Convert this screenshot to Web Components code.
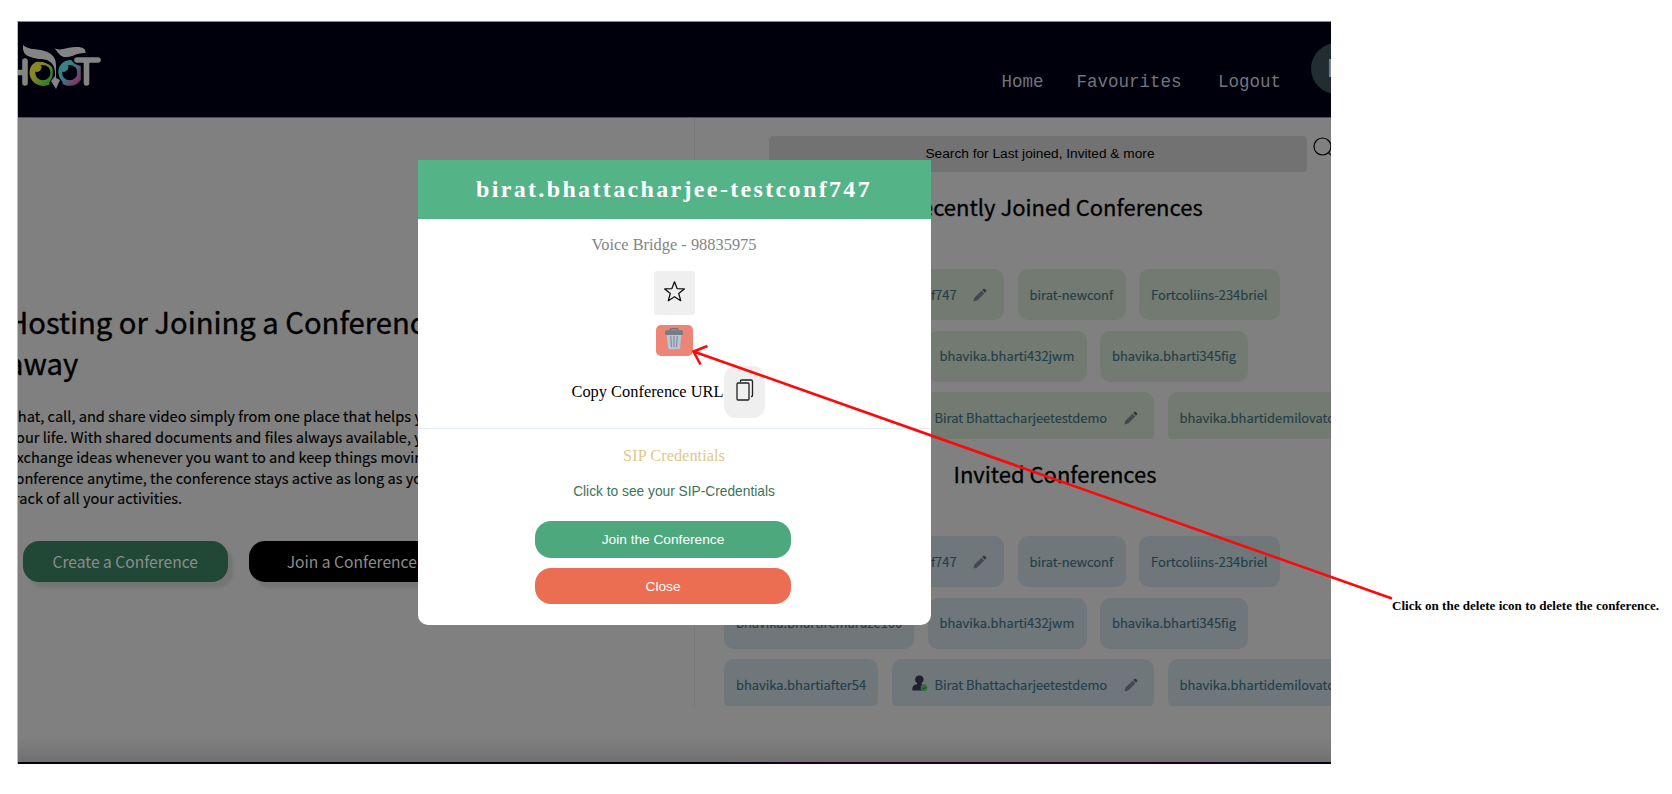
<!DOCTYPE html>
<html lang="en">
<head>
<meta charset="utf-8">
<title>Hoot - delete a conference</title>
<style>
html,body{margin:0;background:#fff;}
body{width:1672px;height:794px;overflow:hidden;position:relative;font-family:"Liberation Sans",sans-serif;}
</style>
</head>
<body>
<help-page></help-page>
<script>
const define = (name, html) => customElements.define(name, class extends HTMLElement {
  constructor() {
    super();
    this.attachShadow({ mode: 'open' }).innerHTML = html;
  }
});

define('hoot-logo', `
<style>:host{display:block;width:84px;height:46px}svg{display:block}</style>
<svg width="84" height="46" viewBox="18 43 84 46">
  <defs>
    <linearGradient id="a" x1="0" y1="0" x2="1" y2="1"><stop offset=".35" stop-color="#8a862c"/><stop offset=".8" stop-color="#36802a"/></linearGradient>
    <linearGradient id="b" x1="0" y1="0" x2="1" y2="1"><stop offset=".4" stop-color="#3a8084"/><stop offset=".9" stop-color="#842f5c"/></linearGradient>
  </defs>
  <path d="M25 61V83M14 72.500H25" fill="none" stroke="#848484" stroke-width="5.600" stroke-linecap="round"/>
  <path fill="url(#a)" d="M36 62C42 61 48 63 52 67C53.500 72 53 78 49.500 82L49.500 84.500C45 87 38 86 34 82.500C28 77 27.500 66 36 62Z"/>
  <circle cx="42.900" cy="72.700" r="7.600" fill="#00000d"/>
  <path fill="#8a862c" d="M36 63L41.500 66C42 70 38.500 73 35 71.500Z"/>
  <path fill="url(#b)" d="M71 60L75 64L80.800 66V80C77 86 69 87.500 62.500 84C64 82 60 80 59 76C56.500 67 62 60 71 60Z"/>
  <circle cx="69.700" cy="72.700" r="7.600" fill="#00000d"/>
  <path fill="#3a8084" d="M62 64L68.500 65.500C69 70 65 73 61.500 71.500Z"/>
  <path d="M77 60H98M86.500 61V83" fill="none" stroke="#00000d" stroke-width="7.600" stroke-linecap="round"/>
  <path d="M77 60H98M86.500 61V83" fill="none" stroke="#848484" stroke-width="5.600" stroke-linecap="round"/>
  <path fill="#848484" stroke="#00000d" stroke-width="1.400" paint-order="stroke" d="M23 45C27 49 34 49 41 50C51 52 56 57 56 65V78L60 80L56 89L51 81L55 76C56 63 49 59 39 59C29 57 22 56 23 45ZM54 48C62 52 67 46 77 47C83 47 86 49 85.500 53C77 52 72 58 64 57C58 55 58 51 54 48Z"/>
</svg>`);

define('nav-bar', `
<style>
:host{display:flex;height:96px;background:#00000d;border-bottom:1px solid #50505a;box-sizing:border-box;flex:none}
hoot-logo{margin:21px 0 0 0;flex:none}
nav{display:flex;margin:47.500px 0 0 auto;font:17.500px/24px "Liberation Mono",monospace;color:#74747c;gap:33px;white-space:pre;flex:none}
nav span:last-child{margin-left:3.500px}
.av{width:20px;height:51px;margin:20.500px 0 0 30px;overflow:hidden;flex:none}
.av div{width:51px;height:51px;box-sizing:border-box;border-radius:50%;background:#222d32;color:#888;font:26px/51px "Liberation Sans",sans-serif;padding-left:16px}
</style>
<hoot-logo></hoot-logo>
<nav><span>Home</span><span>Favourites</span><span>Logout</span></nav>
<div class="av"><div>B</div></div>`);

define('intro-panel', `
<style>
:host{display:block;width:677px;height:588px;box-sizing:border-box;border-right:1px solid #787878;padding-top:183px;overflow:hidden;font-family:"Noto Sans CJK SC",sans-serif;color:#000;flex:none}
h1{font-size:29.200px;font-weight:400;line-height:41px;margin:0 0 23px -11px;white-space:nowrap;-webkit-text-stroke:.4px #000}
p{font-size:14.600px;line-height:20.550px;margin:0 0 0 -9.500px;white-space:nowrap;-webkit-text-stroke:.15px #000}
.row{display:flex;gap:21px;margin:32px 0 0 4.500px}
.row div{width:205.500px;height:41px;border-radius:16px;box-sizing:border-box;background:#214836;color:#8d8d8d;font-size:15.600px;line-height:40px;text-align:center;box-shadow:5px 6px 3px #757575}
.row .j{background:#000}
</style>
<h1>Hosting or Joining a Conference is a click<br>away</h1>
<p>Chat, call, and share video simply from one place that helps you simplify<br>your life. With shared documents and files always available, you can<br>exchange ideas whenever you want to and keep things moving. Join a<br>conference anytime, the conference stays active as long as you keep<br>track of all your activities.</p>
<div class="row"><div>Create a Conference</div><div class="j">Join a Conference</div></div>`);

define('icon-pencil', `
<style>:host{display:block;width:14px;height:14px}svg{display:block}</style>
<svg width="14" height="14" viewBox="0 0 14 14"><path fill="#45484f" d="M.5 13.500L1.300 9.800L8.500 2.700L11.200 5.400L4.200 12.500Z"/><path fill="#35373d" d="M9.200 2L10.500.8C11.500 0 14 2.500 13.200 3.500L11.900 4.800Z"/></svg>`);

define('icon-user', `
<style>:host{display:block;width:16px;height:17px}svg{display:block}</style>
<svg width="16" height="17" viewBox="0 0 16 17"><path fill="#211f33" d="M7.300.5A4 4 0 0 1 9.500 8L9.800 9.500C13 10 13.500 12 13.500 15.500H.3C.3 11.500 1 10 5 9.300L5.200 8A4 4 0 0 1 7.300.5Z"/><circle cx="12" cy="12.700" r="3.400" fill="#317337"/><path d="M10.400 12.700L11.700 14L13.800 11.600" fill="none" stroke="#173c20"/></svg>`);

define('conf-chip', `
<style>
:host{display:flex;align-items:center;height:51px;padding:.5px 12px 0;box-sizing:border-box;border-radius:10px;background:var(--chip);color:#233e48;font:12.900px/20px "Noto Sans CJK SC",sans-serif;-webkit-text-stroke:.15px #233e48;white-space:nowrap;flex:none;overflow:hidden}
</style><slot></slot>`);

define('conf-list', `
<style>
:host{display:block;width:640px;flex:none}
h2{font:400 22px/34px "Noto Sans CJK SC",sans-serif;margin:0;text-align:center;width:662px;color:#000;-webkit-text-stroke:.3px #000}
.rows{display:flex;flex-direction:column;gap:10.500px;height:169.500px;overflow:hidden;margin-top:46px;border-radius:3px}
.r{display:flex;gap:13.500px;flex:none}
icon-user{margin:-2px 7px 0 8px}
.p{margin:0 5.500px 0 16.500px}
.w1{width:280px}.w2{width:108px}.w3{width:141px}.w4{width:190px}.w5{width:159px}.w6{width:148px}.w7{width:154px}.w8{width:262.500px}.w9{width:190px}
</style>
<h2><slot></slot></h2>
<div class="rows">
<div class="r"><conf-chip class="w1"><icon-user></icon-user><span>birat.bhattacharjee-testconf747</span><icon-pencil class="p"></icon-pencil></conf-chip><conf-chip class="w2">birat-newconf</conf-chip><conf-chip class="w3">Fortcoliins-234briel</conf-chip></div>
<div class="r"><conf-chip class="w4">bhavika.bhartiremaruze100</conf-chip><conf-chip class="w5">bhavika.bharti432jwm</conf-chip><conf-chip class="w6">bhavika.bharti345fig</conf-chip></div>
<div class="r"><conf-chip class="w7">bhavika.bhartiafter54</conf-chip><conf-chip class="w8"><icon-user></icon-user><span>Birat Bhattacharjeetestdemo</span><icon-pencil class="p"></icon-pencil></conf-chip><conf-chip class="w9">bhavika.bhartidemilovato</conf-chip></div>
</div>`);

define('conf-panel', `
<style>
:host{display:block;padding:18px 0 0 29px;width:607px;overflow:hidden;flex:none}
.s{display:flex;margin-left:45px}
.bar{width:538px;height:36px;border-radius:4px;background:#727272;color:#000;font:13.700px/35px "Liberation Sans",sans-serif;text-align:center;text-indent:4px;flex:none}
svg{display:block;margin:1px 0 0 6px;flex:none}
conf-list{--chip:#727a71;margin-top:17px}
conf-list+conf-list{--chip:#6f777b;margin-top:17.500px}
</style>
<div class="s"><div class="bar">Search for Last joined, Invited &amp; more</div><svg width="24" height="24" viewBox="0 0 24 24" fill="none" stroke="#000" stroke-width="1.200"><circle cx="9.500" cy="9.500" r="8.500"/><path d="M15.500 15.500L23 23"/></svg></div>
<conf-list>Recently Joined Conferences</conf-list>
<conf-list>Invited Conferences</conf-list>`);

define('conf-modal', `
<style>
:host{display:flex;flex-direction:column;align-items:center;width:513px;height:465px;border-radius:0 0 10px 10px;background:#fff;font:16.400px/20px "Liberation Serif",serif;overflow:hidden;white-space:nowrap}
header{width:100%;height:59px;background:#54b487;color:#fff;font-weight:700;font-size:24px;line-height:59px;letter-spacing:2.350px;text-align:center;flex:none}
.vb{color:#848484;margin-top:16px}
.star{width:41px;height:44px;border-radius:3px;background:#efefef;margin-top:16px;display:flex;justify-content:center}
.star svg{margin-top:9px}
.del{width:37px;height:31px;border-radius:5px;background:#eb8575;margin-top:10px;display:flex;justify-content:center}
.del svg{margin-top:2px}
.copy{display:flex;margin-top:10px;margin-left:-12px;height:52px;align-items:flex-start}
.copy span{margin-top:16px}
.copy div{width:41px;height:52px;border-radius:12px;background:#efefef}
.copy svg{display:block;margin:13px 0 0 12px}
hr{width:100%;height:1px;border:0;background:#e6edf0;margin:10px 0 0;flex:none}
.sip{color:#dfc88d;margin-top:17px}
.see{font:13.750px/20px "Liberation Sans",sans-serif;color:#3a7455;margin-top:16px}
.b{width:256.500px;height:36.500px;border-radius:16px;background:#4ea87d;color:#fff;font:13.700px/37px "Liberation Sans",sans-serif;text-align:center;margin:19px 22px 0 0}
.c{background:#ec6e52;margin-top:10px}
</style>
<header>birat.bhattacharjee-testconf747</header>
<div class="vb">Voice Bridge - 98835975</div>
<div class="star"><svg width="23" height="23" viewBox="0 0 23 23"><path d="M11.500 1.800L14.100 8.600L21.300 8.900L15.700 13.400L17.700 20.700L11.500 16.700L5.300 20.700L7.300 13.400L1.700 8.900L8.900 8.600Z" fill="none" stroke="#111" stroke-width="1.300" stroke-linejoin="round"/></svg></div>
<div class="del"><svg width="20" height="24" viewBox="0 0 20 24"><path d="M6 3.500C6 1.700 7 1.700 10 1.700S14 1.700 14 3.500" fill="none" stroke="#66717a" stroke-width="1.300"/><path d="M2.500 7H17.500L16 21C15.800 22 15.300 22.200 14.300 22.200H5.700C4.700 22.200 4.200 22 4 21Z" fill="#b9c3d2"/><path d="M6.800 9L7.500 20M10 9V20M13.200 9L12.500 20" stroke="#808a98" stroke-width="1.100"/><rect x="1" y="3.200" width="18" height="4.800" rx="1.500" fill="#737d86"/></svg></div>
<div class="copy"><span>Copy Conference URL</span><div><svg width="18" height="22" viewBox="0 0 18 22" fill="none" stroke="#222" stroke-width="1.300"><rect x="1" y="4" width="12" height="17" rx="1"/><path d="M4.500 3V2Q4.500 1 5.500 1H15Q16.500 1 16.500 2.500V16.500Q16.500 17.500 15.500 17.500H15"/></svg></div></div>
<hr>
<div class="sip">SIP Credentials</div>
<div class="see">Click to see your SIP-Credentials</div>
<div class="b">Join the Conference</div>
<div class="b c">Close</div>`);

define('app-window', `
<style>
:host{display:flex;flex-direction:column;box-sizing:border-box;width:1314px;height:743px;border-top:1px solid #85858e;border-left:1px solid #bdbdbd;background:#808080;overflow:hidden}
main{display:flex;flex:none;height:588px}
footer{margin-top:auto;height:26px;background:linear-gradient(#808080,#707070);border-bottom:2px solid;border-image:linear-gradient(90deg,#000008 0 50%,#1a0022 62%,#1a0022 85%,#080010) 1;flex:none;box-sizing:border-box}
</style>
<nav-bar></nav-bar>
<main><intro-panel></intro-panel><conf-panel></conf-panel></main>
<footer></footer>`);

define('help-page', `
<style>
:host{display:flex;width:1672px;height:794px;box-sizing:border-box;padding:21px 0 0 17px;position:relative;overflow:hidden}
conf-modal{position:absolute;left:417.500px;top:160px}
.arrow{position:absolute;left:0;top:0}
.note{font:bold 13.070px/16px "Liberation Serif",serif;color:#000;margin:577px 0 0 61px;white-space:nowrap}
app-window{flex:none}
</style>
<app-window></app-window>
<div class="note">Click on the delete icon to delete the conference.</div>
<conf-modal></conf-modal>
<svg class="arrow" width="1672" height="794" fill="none" stroke="#fa0a0a" stroke-width="2.600"><path d="M1392 598.500L693.500 351.500M707.500 346L693.500 351.500L700.500 364.500"/></svg>`);
</script>
</body>
</html>
